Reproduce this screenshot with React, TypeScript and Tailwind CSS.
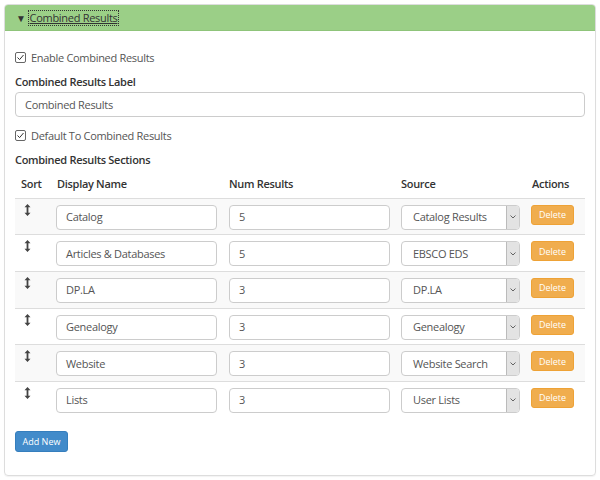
import React from 'react';

const sections = [
  { name: 'Catalog', num: '5', source: 'Catalog Results' },
  { name: 'Articles & Databases', num: '5', source: 'EBSCO EDS' },
  { name: 'DP.LA', num: '3', source: 'DP.LA' },
  { name: 'Genealogy', num: '3', source: 'Genealogy' },
  { name: 'Website', num: '3', source: 'Website Search' },
  { name: 'Lists', num: '3', source: 'User Lists' },
];

const Checkbox = () => (
  <span className="inline-flex items-center justify-center w-[11px] h-[11px] border border-[#666] rounded-[2px] bg-white">
    <svg width="9" height="9" viewBox="0 0 9 9">
      <path d="M1.5 4.5 L3.6 6.6 L7.5 2" fill="none" stroke="#333" strokeWidth="1" />
    </svg>
  </span>
);

const SortIcon = () => (
  <svg width="7" height="12" viewBox="0 0 7 12">
    <path d="M3.5 0 L6.5 3.2 L4.4 3.2 L4.4 8.8 L6.5 8.8 L3.5 12 L0.5 8.8 L2.6 8.8 L2.6 3.2 L0.5 3.2 Z" fill="#444" />
  </svg>
);

export default function App() {
  return (
    <div className="w-[600px] h-[480px] bg-white p-[4px] font-['Open_Sans',sans-serif] text-[11px] leading-[16px] tracking-[-0.3px] text-[#555]">
      <div className="h-[472px] border border-[#ddd] rounded-[4px] shadow-[0_1px_1px_rgba(0,0,0,0.05)] overflow-hidden">
        <div className="h-[26px] bg-[#9bcf87] border-b border-[#8fc47a] flex items-center pl-[11px] text-[#333]">
          <span className="text-[10px] mr-[3px]">▼</span>
          <span className="underline outline outline-1 outline-dotted outline-[#333] leading-[14px] px-[1px]">Combined Results</span>
        </div>

        <div className="px-[10px] pt-[18px]">
          <label className="flex items-center gap-[5px] h-[17px]">
            <Checkbox />
            <span>Enable Combined Results</span>
          </label>

          <div className="mt-[8px] font-semibold text-[#333]">Combined Results Label</div>
          <div className="mt-[2px] h-[25px] border border-[#ccc] rounded-[4px] flex items-center px-[9px] text-[#555]">
            Combined Results
          </div>

          <label className="mt-[10px] flex items-center gap-[5px] h-[17px]">
            <Checkbox />
            <span>Default To Combined Results</span>
          </label>

          <div className="mt-[8px] font-semibold text-[#333]">Combined Results Sections</div>

          <table className="mt-[2px] w-[570px] border-collapse table-fixed">
            <colgroup>
              <col className="w-[36px]" />
              <col className="w-[172px]" />
              <col className="w-[172px]" />
              <col className="w-[131px]" />
              <col className="w-[59px]" />
            </colgroup>
            <thead>
              <tr className="text-[#333] text-left">
                <th className="pl-[6px] h-[28px] border-b border-[#ddd] font-semibold">Sort</th>
                <th className="pl-[6px] border-b border-[#ddd] font-semibold">Display Name</th>
                <th className="pl-[6px] border-b border-[#ddd] font-semibold">Num Results</th>
                <th className="pl-[6px] border-b border-[#ddd] font-semibold">Source</th>
                <th className="pl-[6px] border-b border-[#ddd] font-semibold">Actions</th>
              </tr>
            </thead>
            <tbody>
              {sections.map((s, i) => (
                <tr key={s.name} className={`${i % 2 === 0 ? 'bg-[#f9f9f9]' : 'bg-white'} ${i > 0 ? 'border-t border-[#ddd]' : ''}`}>
                  <td className="align-top pt-[5px] pl-[9px] h-[36.7px]">
                    <SortIcon />
                  </td>
                  <td className="align-top pt-[6px] px-[5px]">
                    <div className="h-[25px] w-[161px] bg-white border border-[#ccc] rounded-[4px] flex items-center px-[9px] whitespace-nowrap">{s.name}</div>
                  </td>
                  <td className="align-top pt-[6px] px-[6px]">
                    <div className="h-[25px] w-[161px] bg-white border border-[#ccc] rounded-[4px] flex items-center px-[9px]">{s.num}</div>
                  </td>
                  <td className="align-top pt-[6px] px-[6px]">
                    <div className="h-[25px] w-[119px] bg-white border border-[#ccc] rounded-[4px] flex items-center overflow-hidden">
                      <span className="flex-1 pl-[11px] whitespace-nowrap">{s.source}</span>
                      <span className="w-[13px] h-full bg-[#e3e3e3] border-l border-[#bbb] flex items-center justify-center">
                        <svg width="6" height="4" viewBox="0 0 6 4">
                          <path d="M0.5 0.5 L3 3 L5.5 0.5" fill="none" stroke="#555" strokeWidth="0.9" />
                        </svg>
                      </span>
                    </div>
                  </td>
                  <td className="align-top pt-[6px] px-[5px]">
                    <button className="h-[20px] w-[43px] bg-[#f0ad4e] border border-[#eea236] rounded-[3px] text-white text-[9px] leading-none tracking-normal">
                      Delete
                    </button>
                  </td>
                </tr>
              ))}
            </tbody>
          </table>

          <button className="mt-[13px] h-[21px] w-[53px] bg-[#428bca] border border-[#357ebd] rounded-[3px] text-white text-[9px] leading-none tracking-normal">
            Add New
          </button>
        </div>
      </div>
    </div>
  );
}
